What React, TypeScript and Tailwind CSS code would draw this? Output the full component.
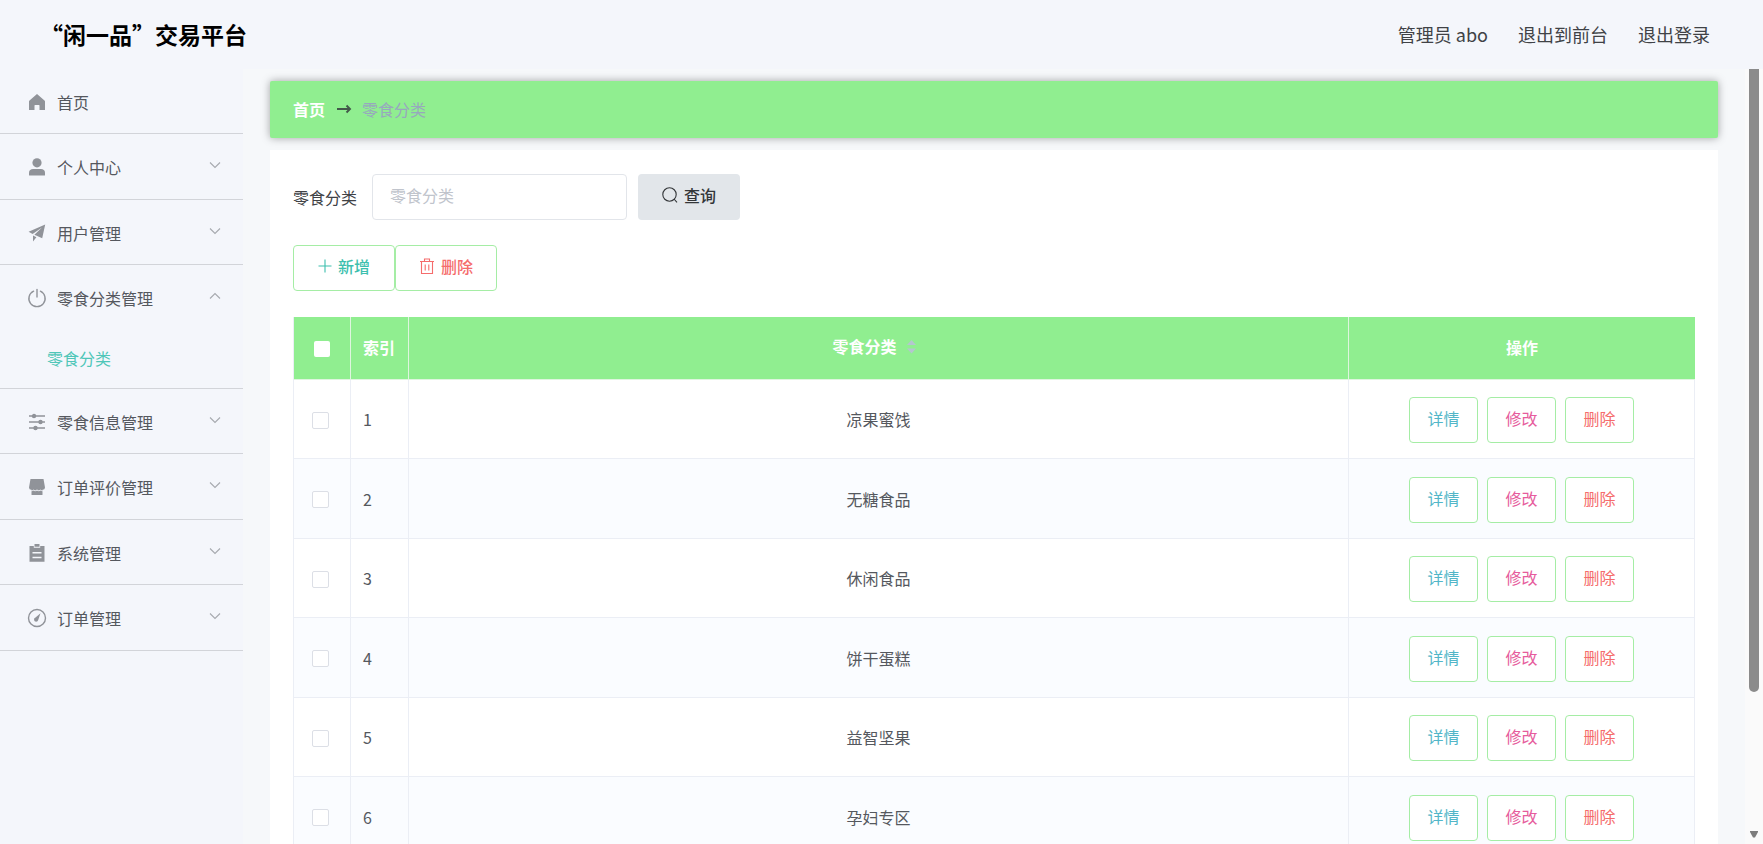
import type { ReactNode } from 'react';

const icons: Record<string, ReactNode> = {
  home: <path d="M9 1 1.500 7.500Q1 8 1 8.500V17h5.500v-4.500q0-.5.5-.5h4q.5 0 .5.5V17H17V8.500q0-.5-.5-1z" fill="currentColor" />,
  user: (
    <g fill="currentColor">
      <circle cx="9" cy="4.800" r="4.600" />
      <path d="M1 17v-2.500C1 12.300 2.800 11 5 11h8c2.200 0 4 1.300 4 3.500V17q0 .5-.5.5h-15Q1 17.500 1 17z" />
    </g>
  ),
  plane: (
    <path
      d="M17.200.600.600 7.800l4 2.200 9.400-6.500-7.600 7.300 7.800 3.400zM5 11.500v6l3.400-4.200z"
      fill="currentColor"
    />
  ),
  power: (
    <g fill="none" stroke="currentColor" strokeWidth="1.400" strokeLinecap="round">
      <path d="M9 .500v7.500" />
      <path d="M5.600 2.200a8.100 8.100 0 1 0 6.800 0" />
    </g>
  ),
  sliders: (
    <g stroke="currentColor" strokeWidth="1.400" fill="currentColor">
      <path d="M1 3h16M1 9h16M1 15h16" />
      <circle cx="6" cy="3" r="1.500" />
      <circle cx="12.500" cy="9" r="1.500" />
      <circle cx="7.500" cy="15" r="1.500" />
    </g>
  ),
  shop: (
    <g fill="currentColor">
      <path d="M2.500 1h13L17 9.500a2.400 2.400 0 0 1-2.500 2.300v.7q-1.500 0-2-.9-1.500 1.600-3.500 0-2 1.600-3.500 0-.5.9-2 .9v-.7A2.400 2.400 0 0 1 1 9.500z" />
      <path d="M3.500 13.200q1.300 0 2-.6 1.700 1.200 3.500 0 1.800 1.200 3.500 0 .7.6 2 .6V16.500q0 .5-.5.5H4q-.5 0-.5-.5z" />
    </g>
  ),
  order: (
    <path
      fillRule="evenodd"
      fill="currentColor"
      d="M1.500 2h4.300v1.800h6.400V2h4.300v15.800h-15zM6.500 0h5v2.800h-5zM4.500 8v1.500h9V8zM4.500 12.800v1.500h9v-1.500z"
    />
  ),
  gauge: (
    <g>
      <circle cx="9" cy="9" r="8.500" fill="none" stroke="currentColor" strokeWidth="1.400" />
      <path d="M12.500 4.300 7.500 8.600a2.100 2.100 0 1 0 2.700 2.400z" fill="currentColor" />
    </g>
  ),
};

const menu = [
  { label: '首页', icon: 'home' },
  { label: '个人中心', icon: 'user', children: [] },
  { label: '用户管理', icon: 'plane', children: [] },
  { label: '零食分类管理', icon: 'power', children: ['零食分类'] },
  { label: '零食信息管理', icon: 'sliders', children: [] },
  { label: '订单评价管理', icon: 'shop', children: [] },
  { label: '系统管理', icon: 'order', children: [] },
  { label: '订单管理', icon: 'gauge', children: [] },
];

const categories = ['凉果蜜饯', '无糖食品', '休闲食品', '饼干蛋糕', '益智坚果', '孕妇专区'];

function Chevron({ open }: { open: boolean }) {
  return (
    <svg width="12" height="10" viewBox="0 0 12 10" fill="none" stroke="#a6a9ae" strokeWidth="1.100" aria-hidden="true">
      <path d={open ? 'M1 6.500l5-5 5 5' : 'M1 1.500l5 5 5-5'} />
    </svg>
  );
}

function Sidebar() {
  return (
    <nav className="w-[243px] shrink-0 bg-[#f4f6fb]">
      <ul>
        {menu.map((item) => {
          const open = !!item.children?.length;
          return (
            <li key={item.label} className="flex flex-col border-b border-[#d2d4d9] odd:min-h-[65px] even:min-h-[66px]">
              <button type="button" className="flex h-16 w-full items-center justify-between pr-[22px] pl-7 text-[#55585e]">
                <span className="flex items-center gap-[11px] pt-0.5">
                  <svg width="18" height="18" viewBox="0 0 18 18" className="overflow-visible text-[#909399]" aria-hidden="true">
                    {icons[item.icon]}
                  </svg>
                  {item.label}
                </span>
                {item.children && <Chevron open={open} />}
              </button>
              {open &&
                item.children?.map((child) => (
                  <a key={child} href="#" className="flex h-[59px] items-center pb-0.5 pl-[47px] text-[#4fc6b8]">
                    {child}
                  </a>
                ))}
            </li>
          );
        })}
      </ul>
    </nav>
  );
}

function RowButton({ className, children }: { className: string; children: ReactNode }) {
  return (
    <button type="button" className={`h-[46px] w-[69px] rounded border border-[#a5eda5] bg-white pb-1 ${className}`}>
      {children}
    </button>
  );
}

export default function App() {
  return (
    <div className="flex h-screen flex-col overflow-hidden bg-[#f6f8fa] font-['Noto_Sans_CJK_SC','Noto_Sans',sans-serif] text-base text-[#55585e]">
      <header className="flex h-[69px] shrink-0 items-center justify-between bg-[#f4f6fb] pr-[53px] pb-px pl-10">
        <h1 className="text-[23px] font-bold text-black">“闲一品”交易平台</h1>
        <div className="flex gap-[30px] text-lg text-[#404246]">
          <span>管理员 abo</span>
          <a href="#">退出到前台</a>
          <a href="#">退出登录</a>
        </div>
      </header>

      <div className="flex min-h-0 flex-1">
        <Sidebar />

        <main className="min-w-0 flex-1 overflow-hidden px-[27px] pt-3">
          <div className="flex h-[57px] items-center rounded-xs bg-[#90ee90] px-[23px] pb-0.5 shadow-[0_0_8px_rgba(0,0,0,0.35)]">
            <a href="#" className="font-bold text-white">首页</a>
            <svg width="16" height="10" viewBox="0 0 16 10" fill="none" stroke="#43584a" strokeWidth="1.900" className="mr-[10px] ml-[11px]" aria-hidden="true">
              <path d="M1 5h13M10.500 1.500L14 5l-3.500 3.500" />
            </svg>
            <span className="text-[#97a8be]">零食分类</span>
          </div>

          <section className="mt-3 bg-white px-[23px] pt-6 pb-10">
            <form className="flex items-center">
              <label htmlFor="category" className="pb-px text-[#404246]">零食分类</label>
              <input
                id="category"
                type="text"
                placeholder="零食分类"
                className="ml-[15px] h-[46px] w-[255px] rounded border border-[#e2e5ea] bg-white px-[17px] pb-1 outline-none placeholder:text-[#c0c4cc]"
              />
              <button type="button" className="ml-[11px] flex h-[46px] w-[102px] items-center justify-center gap-1.5 rounded bg-[#e2e6ea] pb-1 font-medium text-[#333639]">
                <svg width="16" height="16" viewBox="0 0 16 16" fill="none" stroke="currentColor" strokeWidth="1.100" aria-hidden="true">
                  <circle cx="7.500" cy="7.500" r="6.700" />
                  <path d="M12 12l3 3.300" />
                </svg>
                查询
              </button>
            </form>

            <div className="mt-[25px] flex">
              <button type="button" className="flex h-[46px] w-[102px] items-center justify-center gap-1.5 rounded border border-[#a5eda5] bg-white pb-1 font-medium text-[#3dbfae]">
                <svg width="14" height="14" viewBox="0 0 14 14" stroke="currentColor" strokeWidth="1.100" aria-hidden="true">
                  <path d="M7 .500v13M.500 7h13" />
                </svg>
                新增
              </button>
              <button type="button" className="flex h-[46px] w-[102px] items-center justify-center gap-1.5 rounded border border-[#a5eda5] bg-white pb-1 font-medium text-[#f56c6c]">
                <svg width="16" height="16" viewBox="0 0 16 16" fill="none" stroke="currentColor" strokeWidth="1.100" aria-hidden="true">
                  <path d="M1 3.500h14M5.500 3.500V1h5v2.500M2.500 3.500v12h11v-12M6.200 6.500v6M9.800 6.500v6" />
                </svg>
                删除
              </button>
            </div>

            <table className="mt-[26px] w-full table-fixed border-separate border-spacing-0 border-l border-[#ebeef5]">
              <colgroup>
                <col className="w-[57px]" />
                <col className="w-[58px]" />
                <col />
                <col className="w-[346px]" />
              </colgroup>
              <thead>
                <tr className="h-[63px] bg-[#90ee90] text-white">
                  <th className="border-r border-b border-[#dff5df] pt-0.5">
                    <input type="checkbox" aria-label="全选" className="mx-auto block size-4 appearance-none rounded-xs bg-white" />
                  </th>
                  <th className="border-r border-b border-[#dff5df] px-3 pb-0.5 text-left whitespace-nowrap">索引</th>
                  <th className="border-r border-b border-[#dff5df] pb-1">
                    <span className="inline-flex items-center">
                      零食分类
                      <svg width="28" height="16" viewBox="0 0 28 16" fill="#b4c6cf" aria-hidden="true">
                        <path d="M10 7l4.500-5L19 7zM10 10.500h9l-4.500 5z" />
                      </svg>
                    </span>
                  </th>
                  <th className="border-b border-[#dff5df] pb-0.5">操作</th>
                </tr>
              </thead>
              <tbody>
                {categories.map((name, i) => (
                  <tr key={name} className="odd:h-[79px] even:h-20 even:bg-[#fafcff]">
                    <td className="border-r border-b border-[#ebeef5] pt-0.5 pl-[18px]">
                      <input type="checkbox" aria-label={name} className="block size-[17px] appearance-none rounded-xs border border-[#dcdfe6] bg-white" />
                    </td>
                    <td className="border-r border-b border-[#ebeef5] px-3">{i + 1}</td>
                    <td className="border-r border-b border-[#ebeef5] text-center">{name}</td>
                    <td className="border-r border-b border-[#ebeef5] pt-0.5">
                      <div className="flex justify-center gap-[9px]">
                        <RowButton className="text-[#52b6c8]">详情</RowButton>
                        <RowButton className="text-[#e65c9c]">修改</RowButton>
                        <RowButton className="text-[#f56c6c]">删除</RowButton>
                      </div>
                    </td>
                  </tr>
                ))}
              </tbody>
            </table>
          </section>
        </main>

        {/* scroll track */}
        <div className="flex w-[18px] shrink-0 flex-col items-center justify-between bg-[#fafafa] pb-1.5" aria-hidden="true">
          <div className="h-[81%] w-[10px] rounded-b-full bg-[#8b8b8b]" />
          <svg width="8" height="7" viewBox="0 0 8 7" fill="#7d7d7d">
            <path d="M0 0h8v1L5 6.500H3L0 1z" />
          </svg>
        </div>
      </div>
    </div>
  );
}
